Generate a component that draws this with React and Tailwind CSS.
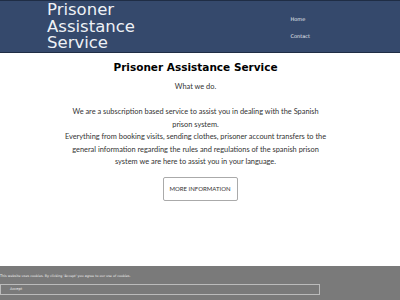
export default function App() {
  return (
    <div className="relative h-[300px] w-[400px] overflow-hidden bg-white">
      <header className="flex h-[53px] border-y border-[#1f2d45] bg-[#35496c]">
        <div
          className="pl-[47px] pt-[1px] text-[16.5px] leading-[16.5px] text-[#eef1f6]"
          style={{ fontFamily: '"DejaVu Sans", sans-serif' }}
        >
          <div>Prisoner</div>
          <div>Assistance</div>
          <div>Service</div>
        </div>
        <nav
          className="ml-auto mr-[90px] flex flex-col gap-[10px] pt-[15px] text-[5px] leading-[7px] text-[#e8ecf2]"
          style={{ fontFamily: '"DejaVu Sans", sans-serif' }}
        >
          <span>Home</span>
          <span>Contact</span>
        </nav>
      </header>

      <main className="flex flex-col items-center text-center">
        <h1
          className="mt-[7px] pr-[9px] text-[10.5px] font-bold leading-[14px] text-black"
          style={{ fontFamily: '"DejaVu Sans", sans-serif' }}
        >
          Prisoner Assistance Service
        </h1>
        <div
          className="mt-[7px] w-[300px] pr-[9px] text-[7.4px] leading-[12.5px] text-[#333]"
          style={{ fontFamily: 'Lato, sans-serif' }}
        >
          <p>What we do.</p>
          <p className="mt-[12.5px]">
            We are a subscription based service to assist you in dealing with the Spanish
            <br />
            prison system.
          </p>
          <p>
            Everything from booking visits, sending clothes, prisoner account transfers to the
            <br />
            general information regarding the rules and regulations of the spanish prison
            <br />
            system we are here to assist you in your language.
          </p>
        </div>
        <button
          className="mt-[8px] h-[24px] w-[75px] rounded-[2px] border border-[#aaa] text-[6px] text-[#333]"
          style={{ fontFamily: 'Lato, sans-serif' }}
        >
          MORE INFORMATION
        </button>
      </main>

      <div
        className="absolute inset-x-0 bottom-0 h-[34px] bg-[#7a7a7a] text-[#eee]"
        style={{ fontFamily: '"DejaVu Sans", sans-serif' }}
      >
        <p className="pt-[8px] text-[3.3px] leading-[5px]">
          This website uses cookies. By clicking 'Accept' you agree to our use of cookies.
        </p>
        <button className="mt-[5px] block h-[11px] w-[320px] border border-[#bbb] pl-[9px] text-left text-[3.6px]">
          Accept
        </button>
      </div>
    </div>
  );
}
